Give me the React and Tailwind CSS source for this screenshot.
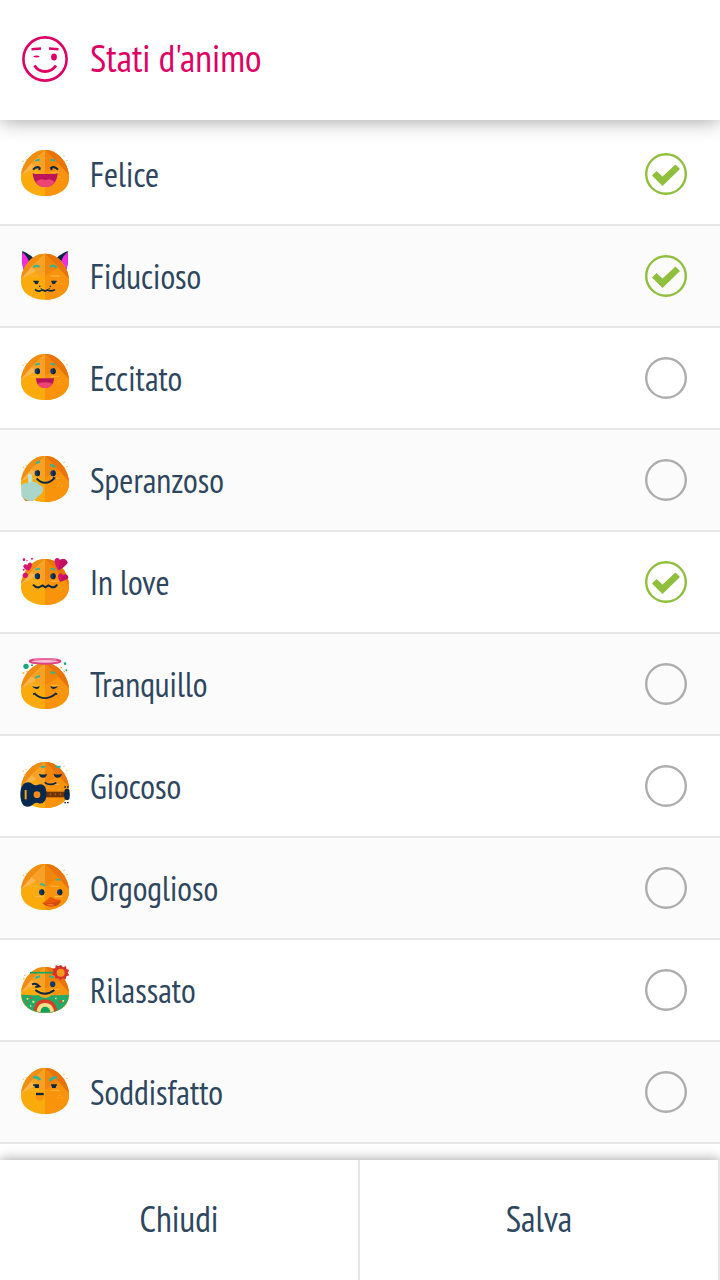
import { useState } from 'react';

const ink = '#0a2745';
const teal = '#2bb59b';

const OpenEyes = () => (
  <g>
    <ellipse cx="82" cy="82" rx="8" ry="9" fill="#123c69" />
    <ellipse cx="129" cy="82" rx="8" ry="9" fill="#123c69" />
    <path d="M82 73a8 9 0 0 1 0 18zM129 73a8 9 0 0 1 0 18z" fill={ink} />
  </g>
);

const Brows = () => (
  <path d="M76 63q7-5 14-3M121 60q8-2 14 3" stroke={teal} strokeWidth="5" fill="none" />
);

const Sparks = () => (
  <path
    d="M38 62h4v3h-4zM47 57h3v3h-3zM41 71h3v4h-3zM160 47h4v3h-4zM169 60h4v3h-4z"
    fill="#f9b84c"
  />
);

// Round orange body shared by every mood
const Face = ({ top = 33 }) => (
  <g transform={`translate(0 ${top - 30})`}>
    <path
      d="M105 30C130 30 148 44 162 64C172 80 177 98 177 114C177 146 147 168 105 168C63 168 33 146 33 114C33 98 38 80 48 64C62 44 80 30 105 30Z"
      fill="#fbaa0b"
    />
    <path d="M105 30C130 30 148 44 162 64C172 80 177 98 177 114C177 146 147 168 105 168Z" fill="#f9930c" />
    <path d="M105 30C80 30 62 44 48 64C39 79 34 90 33 106L64 70Z" fill="#f08d12" />
    <path d="M105 32L64 70L33 106L76 84Z" fill="#fbb54a" />
    <path d="M105 32L76 84L105 106Z" fill="#f8a31f" />
    <path d="M105 32L64 70L88 88L105 96Z" fill="#f7a126" />
    <path d="M105 30C130 30 148 44 162 64C171 79 176 92 177 106L146 72Z" fill="#e8740a" />
    <path d="M105 32L146 72L105 96Z" fill="#f1860b" />
    <path d="M61 97h26M122 97h26" stroke="#fcb239" strokeWidth="4" />
    <path d="M146 110h5v4h-5zM153 118h4v4h-4zM142 117h4v4h-4z" fill="#fca92b" />
  </g>
);

const Felice = () => (
  <>
    <Face />
    <g transform="translate(0 3)">
      <Sparks />
      <Brows />
      <path d="M69 89q11-12 20-5l-1 6M144 89q-11-12-21-5l2 6" stroke={ink} strokeWidth="6" fill="none" />
      <path d="M68 99L74 102H137L143 99C141 124 130 141 106 141C81 141 70 124 68 99Z" fill="#bd1559" />
      <path d="M78 126Q91 112 106 121Q120 112 134 126Q125 141 106 141Q87 141 78 126Z" fill="#ed4573" />
    </g>
  </>
);

const Fiducioso = () => (
  <>
    <g transform="translate(0 -3)">
      <path d="M37 33Q56 40 70 54L56 84L40 88Q34 60 37 33Z" fill={ink} />
      <path d="M173 33Q154 40 140 54L154 84L170 88Q176 60 173 33Z" fill={ink} />
      <path d="M37 37Q50 46 56 62L50 84L40 88Q34 62 37 37Z" fill="#f52be0" />
      <path d="M173 37Q160 46 154 62L160 84L170 88Q176 62 173 37Z" fill="#f52be0" />
    </g>
    <Face top={38} />
    <g transform="translate(0 -3)">
      <path d="M70 83q8-10 19-2M120 81q10-8 20 2" stroke={teal} strokeWidth="6" fill="none" />
      <path d="M70 124h16M124 124h16" stroke={ink} strokeWidth="4" />
      <path d="M73 124h13q-1 9-7 9t-6-9zM125 124h13q-1 9-7 9t-6-9z" fill={ink} />
      <path d="M75 148Q82 156 91 152L98 150L105 153L113 150Q124 156 135 149" stroke={ink} strokeWidth="5" fill="none" />
      <path d="M87 137h4v4h-4zM119 137h4v4h-4zM92 144h3v3h-3zM116 144h3v3h-3z" fill={ink} />
    </g>
  </>
);

const Eccitato = () => (
  <>
    <Face />
    <g transform="translate(0 3)">
      <Sparks />
      <Brows />
      <OpenEyes />
      <path d="M78 103H132C131 121 121 132 105 132C89 132 79 121 78 103Z" fill="#b81559" />
      <path d="M82 119Q105 111 128 119Q121 132 105 132Q89 132 82 119Z" fill="#ed4573" />
    </g>
  </>
);

const Speranzoso = () => (
  <>
    <Face />
    <g transform="translate(0 3)">
      <Sparks />
      <path d="M78 52l12-6M120 57q8 0 15 6" stroke={teal} strokeWidth="6" fill="none" />
      <OpenEyes />
      <path d="M80 97Q91 110 105 110Q121 110 132 97" stroke={ink} strokeWidth="6" fill="none" />
      <path d="M129 95l7 2" stroke={ink} strokeWidth="5" />
      <path d="M34 148L46 165L70 165L60 150Z" fill="#e57810" />
      <path
        d="M54 88Q60 80 66 88L68 108Q82 106 87 117Q99 119 100 130Q99 144 84 151Q74 167 57 165Q36 158 34 143L33 119Q38 110 55 110L54 88Z"
        fill="#a9d6c8"
      />
      <path d="M54 88Q60 80 65 88L65 108L55 110Z" fill="#c0e6d9" />
    </g>
  </>
);

const InLove = () => (
  <>
    <Face top={36} />
    <g transform="translate(0 -3)">
      <g transform="translate(0 9)">
        <Brows />
        <OpenEyes />
      </g>
      <path d="M69 116Q78 126 87 124L98 118L106 124L115 118L126 124Q135 125 142 116" stroke={ink} strokeWidth="6" fill="none" />
      <g fill="#d9156b">
        <path d="M134 48C132 37 144 31 150 42C160 35 170 40 173 50Q164 63 145 73Q136 62 134 48Z" />
        <path d="M144 89C146 80 155 79 159 87C168 82 175 88 175 96Q165 104 150 107Q144 98 144 89Z" />
        <path d="M40 62C40 53 49 53 52 58C54 47 65 47 66 56Q65 66 57 74Q44 72 40 62Z" />
        <circle cx="46" cy="88" r="8" />
        <circle cx="42" cy="41" r="4" />
        <circle cx="51" cy="44" r="2" />
        <circle cx="66" cy="38" r="3" />
        <circle cx="41" cy="71" r="3" />
      </g>
      <path d="M150 42C160 35 170 40 173 50Q164 63 145 73ZM159 87C168 82 175 88 175 96Q165 104 150 107Z" fill="#c41062" />
    </g>
  </>
);

const Tranquillo = () => (
  <>
    <Face top={42} />
    <g transform="translate(0 -3)">
      <ellipse cx="105" cy="40" rx="46" ry="7" fill="#f8c3d8" stroke="#dc4384" strokeWidth="6" />
      <path d="M72 36Q105 29 139 36" stroke="#ef7cab" strokeWidth="4" fill="none" />
      <path d="M76 90q6-5 14-5M121 74q8-3 14 3" stroke={teal} strokeWidth="6" fill="none" />
      <path d="M66 114q13 6 23 0q-1 9-9 9t-14-9zM121 114q12 6 23 0q-5 9-13 9t-10-9z" fill={ink} />
      <path d="M69 139l8-3M75 138q29 25 61 0M134 136l8 3" stroke={ink} strokeWidth="5" fill="none" />
      <circle cx="48" cy="55" r="8" fill="#17a77b" />
      <circle cx="165" cy="47" r="4" fill="#17a77b" />
      <circle cx="169" cy="67" r="3" fill="#17a77b" />
      <circle cx="66" cy="52" r="3" fill="#17a77b" />
      <path d="M38 73h5v4h-5zM152 57h4v4h-4zM161 69h4v4h-4zM49 69h4v4h-4z" fill="#f0a329" />
    </g>
  </>
);

const Giocoso = () => (
  <>
    <Face />
    <g transform="translate(0 -3)">
      <Sparks />
      <path d="M92 50h13M137 50h15" stroke={teal} strokeWidth="6" />
      <path d="M87 71q12 5 24 0q-2 12-12 12t-12-12zM131 71q13 5 25 0q-3 12-13 12t-12-12z" fill={ink} />
      <path d="M104 97Q119 109 139 98" stroke={ink} strokeWidth="5" fill="none" />
      <path d="M105 125H166V142H105Z" fill="#6f3509" />
      <path d="M121 130v6M136 130v6M151 130v6" stroke="#bd610c" strokeWidth="3" />
      <path d="M164 119q8-6 14 0q3 14 0 29q-6 5-14 0q-4-14 0-29z" fill={ink} />
      <path d="M163 109h5v4h-5zM171 109h5v4h-5zM163 156h5v4h-5zM171 156h5v4h-5z" fill={ink} />
      <path
        d="M45 99Q59 93 67 102Q77 108 83 104Q99 99 106 112Q113 132 106 151Q97 165 84 159Q75 157 67 165Q56 174 42 167Q30 157 31 130Q32 106 45 99Z"
        fill="#07294e"
      />
      <circle cx="81" cy="134" r="10" fill="#f38b16" />
      <path d="M47 120v28" stroke="#f5a319" strokeWidth="6" />
    </g>
  </>
);

const Orgoglioso = () => (
  <>
    <Face />
    <g transform="translate(0 -3)">
      <g transform="translate(0 6)">
        <Sparks />
      </g>
      <path d="M90 97q9-3 15 5M137 84q7-3 14 0" stroke={teal} strokeWidth="5" fill="none" />
      <path d="M75 134h25M133 134h25" stroke="#fdb94a" strokeWidth="4" />
      <ellipse cx="95" cy="121" rx="8" ry="9" fill="#123c69" />
      <ellipse cx="149" cy="121" rx="8" ry="9" fill="#123c69" />
      <path d="M95 112a8 9 0 0 1 0 18zM149 112a8 9 0 0 1 0 18z" fill={ink} />
      <path d="M97 153Q108 150 119 136Q127 134 134 141L153 144Q149 159 129 163Q108 165 97 153Z" fill="#e9590b" />
      <path d="M97 154Q122 156 153 146Q148 162 130 163Q108 165 97 154Z" fill="#d24c09" />
      <path d="M110 158q11-4 24 0q-12 5-24 0z" fill="#f77b32" />
    </g>
  </>
);

const Rilassato = () => (
  <>
    <Face top={36} />
    <g transform="translate(0 -3)">
      <path d="M60 56H133" stroke="#0aa868" strokeWidth="5" />
      <path d="M76 72l14-6M118 66l14 5" stroke={teal} strokeWidth="6" />
      <path d="M66 91q13-5 22 6l-12 2" stroke={ink} strokeWidth="6" fill="none" />
      <ellipse cx="128" cy="91" rx="8" ry="9" fill="#123c69" />
      <path d="M34 122Q105 126 177 122C175 156 147 177 105 177C64 177 36 156 34 122Z" fill="#23aa67" />
      <path d="M76 108q29 26 57 0l-7 14q-20 20-41 0z" fill="#f9a51b" />
      <path d="M76 108q29 22 57 0" stroke={ink} strokeWidth="6" fill="none" />
      <path d="M71 168Q76 136 105 136Q134 136 142 168Q126 176 105 177Q86 176 71 168Z" fill="#da3d27" />
      <path d="M80 172Q83 147 105 147Q128 147 132 172Q119 177 105 177Q91 177 80 172Z" fill="#f5df87" />
      <path d="M91 175Q93 158 105 158Q119 158 121 175Q105 178 91 175Z" fill="#149e5d" />
      <path d="M50 132h5v5h-5zM67 140h6v6h-6zM135 131h5v5h-5zM157 138h5v5h-5zM60 154h4v4h-4z" fill="#f5df87" />
      <path d="M60 128h6v6h-6zM148 139h7v7h-7zM49 143h5v5h-5z" fill="#e14735" />
      <path
        d="M153 32l6 8 9-4 1 9 9 3-5 8 5 8-9 3-2 9-9-3-7 6-6-7-9 2-1-9-9-4 5-8-4-8 9-3 1-9 9 4z"
        fill="#d92f2a"
      />
      <circle cx="152" cy="56" r="12" fill="#f9981c" />
      <path d="M39 72h5v4h-5zM42 62h4v4h-4z" fill="#f9b84c" />
    </g>
  </>
);

const Soddisfatto = () => (
  <>
    <Face />
    <g transform="translate(0 -3)">
      <g transform="translate(0 6)">
        <Sparks />
      </g>
      <path d="M70 64q12-3 20 8M120 74q7-11 20-9" stroke={teal} strokeWidth="8" fill="none" />
      <path d="M69 87h18M123 87h18" stroke={ink} strokeWidth="4" />
      <path d="M73 87h14v9h-12zM125 87h14l-2 9h-11z" fill={ink} />
      <path d="M75 119Q90 112 104 119Q100 134 89 134Q79 133 75 119Z" fill="#f59512" />
      <path d="M78 114h23" stroke={ink} strokeWidth="7" />
    </g>
  </>
);

const moods = [
  { id: 'felice', label: 'Felice', Icon: Felice },
  { id: 'fiducioso', label: 'Fiducioso', Icon: Fiducioso },
  { id: 'eccitato', label: 'Eccitato', Icon: Eccitato },
  { id: 'speranzoso', label: 'Speranzoso', Icon: Speranzoso },
  { id: 'in-love', label: 'In love', Icon: InLove },
  { id: 'tranquillo', label: 'Tranquillo', Icon: Tranquillo },
  { id: 'giocoso', label: 'Giocoso', Icon: Giocoso },
  { id: 'orgoglioso', label: 'Orgoglioso', Icon: Orgoglioso },
  { id: 'rilassato', label: 'Rilassato', Icon: Rilassato },
  { id: 'soddisfatto', label: 'Soddisfatto', Icon: Soddisfatto },
];

const MoodRow = ({ mood, checked, onToggle }) => {
  const { id, label, Icon } = mood;

  return (
    <li className="border-b-2 border-[#e6e6e6] even:bg-[#fbfbfb]">
      <label htmlFor={id} className="flex h-[100px] cursor-pointer items-center gap-2.5 pr-[33px] pl-2.5">
        <svg viewBox="0 0 210 210" className="size-[70px] shrink-0" aria-hidden="true">
          <Icon />
        </svg>
        <span className="flex-1 text-[34px] leading-10">{label}</span>
        <span className="relative size-[42px] shrink-0">
          <input
            id={id}
            type="checkbox"
            checked={checked}
            onChange={() => onToggle(id)}
            className="peer block size-[42px] appearance-none rounded-full"
          />
          <svg
            viewBox="0 0 42 42"
            className="pointer-events-none absolute inset-0 size-[42px] text-[#adadad] peer-checked:text-[#8fbf3c]"
            aria-hidden="true"
          >
            <circle cx="21" cy="21" r="19.8" fill="none" stroke="currentColor" strokeWidth="2.4" />
            {checked && <path d="M7 22.500L11.500 18L17.500 23.500L30.500 11.500L35 16L17.500 33Z" fill="currentColor" />}
          </svg>
        </span>
      </label>
    </li>
  );
};

const App = () => {
  const [selected, setSelected] = useState(['felice', 'fiducioso', 'in-love']);

  const toggle = (id) => {
    setSelected((prev) => (prev.includes(id) ? prev.filter((item) => item !== id) : [...prev, id]));
  };

  return (
    <div className="flex h-screen flex-col bg-white font-['PT_Sans_Narrow','Liberation_Sans_Narrow','Open_Sans',sans-serif] text-[#2e475f]">
      {/* Header */}
      <header className="relative z-10 flex h-[120px] shrink-0 items-center gap-[22px] bg-white pb-0.5 pl-[22px] text-[#de0063] shadow-[0_0_20px_rgba(0,0,0,0.4)]">
        <svg viewBox="0 0 46 46" className="size-[46px]" fill="none" stroke="currentColor" aria-hidden="true">
          <circle cx="23" cy="23" r="21.6" strokeWidth="2.6" />
          <path d="M9.500 13.200L19 12.500M27 12.500L36.500 13.200" strokeWidth="2.400" />
          <path d="M11 20.500Q14.500 18.500 18 20.500Q14.500 22.500 11 20.500Z" fill="currentColor" stroke="none" />
          <ellipse cx="32" cy="21" rx="2.900" ry="3.500" fill="currentColor" stroke="none" />
          <path d="M12.500 29.500Q16 35.500 23 35.500Q30 35.500 34 29.500" strokeWidth="2.800" />
        </svg>
        <h1 className="pb-0.5 text-[38px] leading-10">Stati d'animo</h1>
      </header>

      {/* Mood list */}
      <main className="flex-1 overflow-y-auto">
        <ul className="pt-1">
          {moods.map((mood) => (
            <MoodRow key={mood.id} mood={mood} checked={selected.includes(mood.id)} onToggle={toggle} />
          ))}
        </ul>
      </main>

      {/* Actions */}
      <footer className="relative z-10 grid h-[120px] shrink-0 grid-cols-2 bg-white text-[36px] shadow-[0_0_12px_rgba(0,0,0,0.4)]">
        <button type="button" className="border-r-2 border-[#e6e6e6] pb-0.5">
          Chiudi
        </button>
        <button type="button" className="border-r-2 border-[#e6e6e6] pb-0.5">
          Salva
        </button>
      </footer>
    </div>
  );
};

export default App;
